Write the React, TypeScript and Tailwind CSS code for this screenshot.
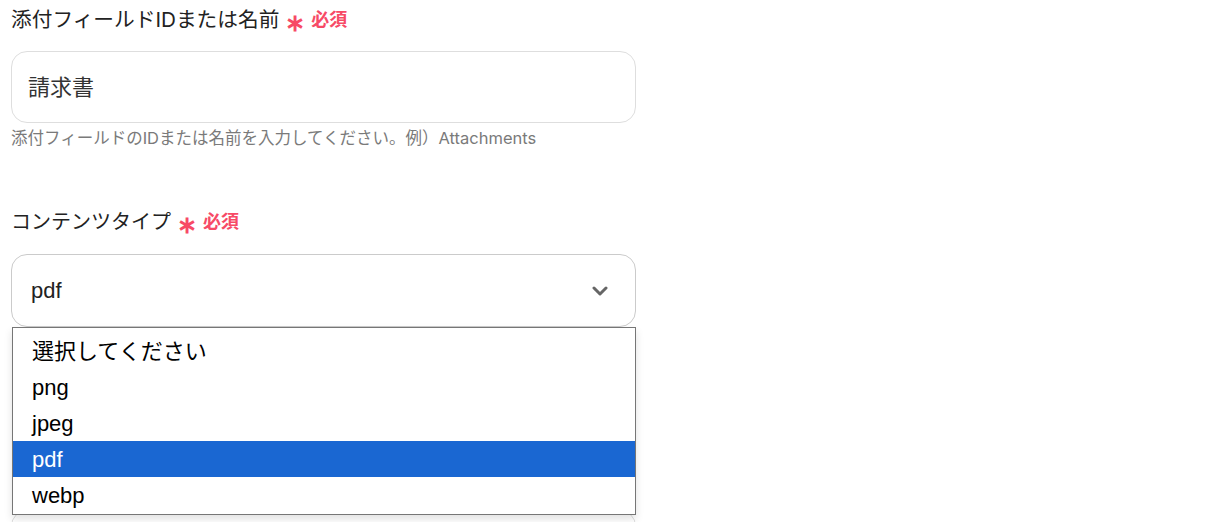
import React from 'react';

const options = ['選択してください', 'png', 'jpeg', 'pdf', 'webp'];

function RequiredMark() {
  return (
    <span className="ml-[6px] inline-flex items-center text-[#f74a66] font-bold">
      <span className="text-[24px] leading-none relative top-[3px]">∗</span>
      <span className="ml-[6px] text-[18px]">必須</span>
    </span>
  );
}

export default function App() {
  const selected = 'pdf';

  return (
    <div
      className="w-[1213px] h-[522px] overflow-hidden bg-white pl-[11px] text-[#333]"
      style={{ fontFamily: 'Inter, "Noto Sans CJK JP", sans-serif' }}
    >
      <div className="w-[625px] relative">
        {/* field 1 */}
        <div className="pt-[8px] h-[32px] flex items-center text-[20.7px] font-normal leading-[24px] text-[#222]">
          添付フィールドIDまたは名前
          <RequiredMark />
        </div>
        <div className="mt-[19px] h-[72px] rounded-2xl border border-[#dedede] flex items-center px-[16px] text-[22px] text-[#333]">
          請求書
        </div>
        <p className="mt-[5px] text-[16.5px] leading-[20px] text-[#7a7a7a]">
          添付フィールドのIDまたは名前を入力してください。例）Attachments
        </p>

        {/* field 2 */}
        <div className="mt-[62px] h-[24px] flex items-center text-[20px] font-normal leading-[24px] text-[#222]">
          コンテンツタイプ
          <RequiredMark />
        </div>
        <div className="relative mt-[20px]">
          <div className="h-[73px] rounded-2xl border border-[#cbcbcb] flex items-center justify-between pl-[19px] pr-[27px]">
            <span className="text-[22px] text-[#222]" style={{ fontFamily: '"Liberation Sans", Arial, sans-serif' }}>
              pdf
            </span>
            <svg width="16" height="10" viewBox="0 0 16 10" fill="none">
              <polyline points="2,2 8,8 14,2" stroke="#666" strokeWidth="3" strokeLinecap="round" strokeLinejoin="round" />
            </svg>
          </div>

          {/* open option list */}
          <ul
            className="absolute left-[1px] top-[73px] w-[624px] h-[188px] bg-white border border-[#767676] pt-[5px] shadow-[0_4px_8px_rgba(0,0,0,0.12)] z-10"
            style={{ fontFamily: '"Liberation Sans", Arial, "Noto Sans CJK JP", sans-serif' }}
          >
            {options.map((o) => (
              <li
                key={o}
                className={`h-[36px] flex items-center pl-[19px] text-[22px] ${
                  o === selected ? 'bg-[#1a67d2] text-white' : 'text-black'
                }`}
              >
                {o}
              </li>
            ))}
          </ul>
        </div>

        <div className="mt-[183px] h-[72px] rounded-2xl border border-[#dedede]" />
      </div>
    </div>
  );
}
